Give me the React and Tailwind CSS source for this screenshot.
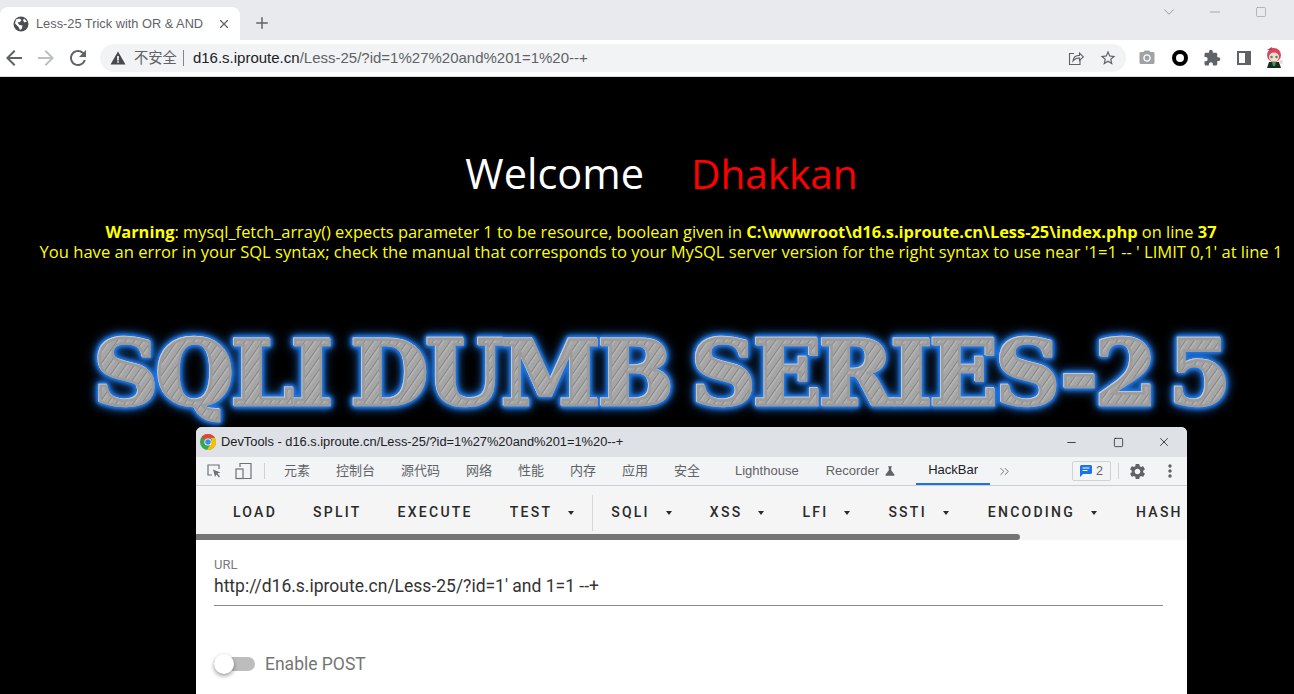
import { X, Plus, ChevronDown, Minus, Square, ChevronsRight } from 'lucide-react'
import { MdArrowBack, MdArrowForward, MdRefresh, MdStarBorder, MdCameraAlt, MdExtension, MdSettings, MdMoreVert, MdScience } from 'react-icons/md'

const sans = "font-['Open_Sans','Noto_Sans_CJK_SC',sans-serif]"

function GlobeIcon() {
  return (
    <svg width="16" height="16" viewBox="0 0 16 16">
      <circle cx="8" cy="8" r="7.500" fill="#4a4d51" />
      <path d="M3 3.500 6.500 2.500 8.500 4 7 6 4.500 6.500 6.500 9 9.500 9.500 9 12.500 7 14 5.500 11 2 7.500ZM11 2.500 14 5.500 11.500 6.500 10 4.500Z" fill="#fff" />
    </svg>
  )
}

function WarnIcon() {
  return (
    <svg width="16" height="14" viewBox="0 0 16 14">
      <path d="M8 0.500 15.500 13.500H0.500Z" fill="#45484c" />
      <path d="M7.200 5h1.600v4.400H7.200ZM7.200 10.200h1.600v1.600H7.200Z" fill="#fff" />
    </svg>
  )
}

function ShareIcon() {
  return (
    <svg width="16" height="16" viewBox="0 0 16 16" fill="none" stroke="#5f6368" strokeWidth="1.100">
      <path d="M6 3.500H1.500v11H12V10" />
      <path d="M5 11c.4-3.800 3-5.600 6.500-5.600V3l3.800 3.800-3.800 3.600V8C8.700 8 6.500 9 5 11Z" />
    </svg>
  )
}

function Avatar() {
  return (
    <svg width="20" height="22" viewBox="0 0 20 22">
      <circle cx="10" cy="8" r="7" fill="#d9475f" />
      <path d="M3 3 8 0l1 3Z" fill="#c93a55" />
      <ellipse cx="10" cy="10" rx="5" ry="4.500" fill="#f7dcd0" />
      <circle cx="7.500" cy="10" r="1.300" fill="#2d9b62" />
      <circle cx="12.500" cy="10" r="1.300" fill="#2d9b62" />
      <path d="M5 15h10l2 6H3Z" fill="#1d2b23" />
      <path d="M8 15h4l-1 4H9Z" fill="#2f9e58" />
      <circle cx="17" cy="15" r="2" fill="#e3dcdc" />
    </svg>
  )
}

function ChromeLogo() {
  return (
    <svg width="16" height="16" viewBox="0 0 16 16">
      <circle cx="8" cy="8" r="8" fill="#34a853" />
      <path d="M8 0a8 8 0 0 1 6.930 4H8a4 4 0 0 0-3.460 2L1.600 3.200A8 8 0 0 1 8 0Z" fill="#ea4335" />
      <path d="M14.930 4A8 8 0 0 1 7 15.940L10.500 10a4 4 0 0 0 .2-6Z" fill="#fbbc04" />
      <circle cx="8" cy="8" r="3.600" fill="#fff" />
      <circle cx="8" cy="8" r="2.800" fill="#4285f4" />
    </svg>
  )
}

function BrowserChrome() {
  return (
    <div className={`shrink-0 ${sans}`}>
      <div className="flex h-10 items-end bg-[#e8eaed]">
        <div className="flex h-[33px] w-[240px] items-center rounded-t-lg bg-white pl-[13px] pr-[9px]">
          <GlobeIcon />
          <span className="ml-[7px] flex-1 whitespace-nowrap font-['Liberation_Sans',sans-serif] text-[12.800px] text-[#5f6368]">Less-25 Trick with OR &amp; AND</span>
          <X size={14} strokeWidth={2} className="text-[#5f6368]" />
        </div>
        <Plus size={18} strokeWidth={2} className="mb-[8px] ml-[13px] text-[#5f6368]" />
        <div className="flex-1" />
        <div className="mb-[19px] flex items-center pr-[27px] text-[#80868b]">
          <ChevronDown size={18} strokeWidth={1} />
          <Minus size={16} strokeWidth={1} className="ml-[29px]" />
          <Square size={12} strokeWidth={1} className="ml-[32px]" />
        </div>
      </div>
      <div className="flex h-[37px] items-center border-b border-[#dadce0] bg-white pl-[2px]">
        <MdArrowBack size={24} className="text-[#5f6368]" />
        <MdArrowForward size={24} className="ml-[8px] text-[#bcc0c4]" />
        <MdRefresh size={24} className="ml-[8px] text-[#5f6368]" />
        <div className="ml-[10px] flex h-[28px] w-[1026px] items-center rounded-full bg-[#f1f3f4] pl-[10px] pr-[9px]">
          <WarnIcon />
          <span className="ml-[8px] text-[14.300px] text-[#5f6368]">不安全</span>
          <span className="ml-[6px] h-[16px] w-px bg-[#80868b]" />
          <span className="ml-[9px] font-['Liberation_Sans',sans-serif] text-[15px] text-[#5f6368]">
            <span className="text-[#202124]">d16.s.iproute.cn</span>/Less-25/?id=1%27%20and%201=1%20--+
          </span>
          <div className="flex-1" />
          <ShareIcon />
          <MdStarBorder size={18} className="ml-[15px] text-[#5f6368]" />
        </div>
        <MdCameraAlt size={18} className="ml-[12px] text-[#a0a3a6]" />
        <span className="ml-[16px] h-[16px] w-[16px] rounded-full border-[4px] border-black bg-white" />
        <MdExtension size={18} className="ml-[15px] text-[#5f6368]" />
        <span className="ml-[16px] flex h-[14px] w-[14px] justify-end border-[2px] border-[#5f6368] bg-white"><span className="h-full w-[4px] bg-[#5f6368]" /></span>
        <span className="ml-[13px]"><Avatar /></span>
      </div>
    </div>
  )
}

function Tab({ children, className = '' }) {
  return <span className={`text-[13px] ${className}`}>{children}</span>
}

function HackBtn({ label, arrow, className = '' }) {
  return (
    <span className={`flex shrink-0 items-center whitespace-nowrap font-['Roboto',sans-serif] text-[14px] font-medium tracking-[2.250px] text-[#2a2a2a] ${className}`}>
      {label}
      {arrow && <span className="ml-[16px] h-0 w-0 border-x-[3.500px] border-t-[4px] border-x-transparent border-t-[#2a2a2a]" />}
    </span>
  )
}

function DevTools() {
  return (
    <div className="absolute left-[196px] top-[350px] w-[991px] overflow-hidden rounded-t-[6px] bg-white text-left">
      <div className="flex h-[30px] items-center bg-[#dee1e6] pl-[4px]">
        <ChromeLogo />
        <span className="ml-[5px] font-['Liberation_Sans',sans-serif] text-[12.850px] text-[#202124]">DevTools - d16.s.iproute.cn/Less-25/?id=1%27%20and%201=1%20--+</span>
        <div className="flex-1" />
        <Minus size={13} strokeWidth={1.300} className="text-black" />
        <Square size={11} strokeWidth={1.400} className="ml-[35px] text-black" />
        <X size={14} strokeWidth={1.200} className="ml-[33px] mr-[16px] text-black" />
      </div>
      <div className={`flex h-[29px] items-center border-b border-[#cbcdd1] bg-[#f3f4f6] text-[#5f6368] ${sans}`}>
        <svg width="16" height="16" viewBox="0 0 16 16" fill="none" stroke="#6e7276" strokeWidth="1.200" className="ml-[10px]">
          <path d="M6 12H2V2h11v4" />
          <path d="M7 6.500 14.500 9.500 11.500 10.500 14 13.500 13 14.500 10.500 11.500 9 14Z" fill="#6e7276" stroke="none" />
        </svg>
        <svg width="17" height="18" viewBox="0 0 17 18" fill="none" stroke="#6e7276" strokeWidth="1.200" className="ml-[13px]">
          <path d="M5 5V1.500h11v15H8" />
          <rect x="1" y="7" width="7" height="9.500" />
        </svg>
        <span className="ml-[12px] h-[16px] w-px bg-[#d0d2d6]" />
        <div className="ml-[19px] flex w-[421px] gap-[26px]">
          <Tab>元素</Tab><Tab>控制台</Tab><Tab>源代码</Tab><Tab>网络</Tab><Tab>性能</Tab><Tab>内存</Tab><Tab>应用</Tab><Tab>安全</Tab>
        </div>
        <Tab className="ml-[30px] font-['Liberation_Sans',sans-serif]">Lighthouse</Tab>
        <Tab className="ml-[27px] font-['Liberation_Sans',sans-serif]">Recorder</Tab>
        <MdScience size={14} className="ml-[4px]" />
        <span className="ml-[19px] flex h-full w-[74px] items-center justify-center border-b-2 border-[#1a73e8] font-['Liberation_Sans',sans-serif] text-[13px] text-[#202124]">HackBar</span>
        <ChevronsRight size={15} strokeWidth={1.400} className="ml-[7px]" />
        <div className="flex-1" />
        <span className="flex h-[20px] w-[39px] items-center justify-center gap-[4px] rounded-[2px] border border-[#d0d2d6] font-['Liberation_Sans',sans-serif] text-[12.500px]">
          <svg width="12" height="12" viewBox="0 0 12 12">
            <path d="M0 1.500A1.500 1.500 0 0 1 1.500 0h9A1.500 1.500 0 0 1 12 1.500v6A1.500 1.500 0 0 1 10.500 9H3l-3 3Z" fill="#1a73e8" />
            <path d="M2.500 3h7M2.500 5.500h5" stroke="#fff" />
          </svg>
          2
        </span>
        <span className="ml-[7px] h-[16px] w-px bg-[#d0d2d6]" />
        <MdSettings size={19} className="ml-[9px]" />
        <MdMoreVert size={20} className="ml-[13px] mr-[7px]" />
      </div>
      <div className="relative h-[54px] overflow-hidden bg-[#f5f5f5]">
        <div className="flex h-[53px] items-center pl-[37px]">
          <HackBtn label="LOAD" />
          <HackBtn label="SPLIT" className="ml-[36px]" />
          <HackBtn label="EXECUTE" className="ml-[36px]" />
          <HackBtn label="TEST" arrow className="ml-[37px]" />
          <span className="ml-[18px] h-[36px] w-px shrink-0 bg-[#d8d8d8]" />
          <HackBtn label="SQLI" arrow className="ml-[18px]" />
          <HackBtn label="XSS" arrow className="ml-[38px]" />
          <HackBtn label="LFI" arrow className="ml-[38px]" />
          <HackBtn label="SSTI" arrow className="ml-[38px]" />
          <HackBtn label="ENCODING" arrow className="ml-[39px]" />
          <HackBtn label="HASH" className="ml-[39px]" />
        </div>
        <div className="absolute bottom-0 left-0 h-[6px] w-[824px] rounded-r-full bg-[#757575]" />
      </div>
      <div className="h-[155px] bg-white pl-[18px] pr-[24px] pt-[18px] font-['Roboto',sans-serif]">
        <div className="text-[13px] leading-[14px] text-[#7a7a7a]">URL</div>
        <div className="mt-[1px] h-[33px] border-b border-[#8a8a8a] text-[17.500px] leading-[26px] text-[#333]">http://d16.s.iproute.cn/Less-25/?id=1' and 1=1 --+</div>
        <div className="mt-[45px] flex items-center">
          <span className="relative h-[14px] w-[41px] rounded-full bg-[#bdbdbd]">
            <span className="absolute left-0 top-[-3px] h-[20px] w-[20px] rounded-full bg-white shadow-[0_2px_4px_rgba(0,0,0,0.4)]" />
          </span>
          <span className="ml-[10px] text-[17.500px] text-[#757575]">Enable POST</span>
        </div>
      </div>
    </div>
  )
}

export default function App() {
  return (
    <div className="flex h-screen flex-col overflow-hidden bg-black">
      <BrowserChrome />
      <main className={`relative flex-1 text-center ${sans}`}>
        <h1 className="ml-[29px] mt-[68px] text-[41.500px] leading-[56px] text-white">
          Welcome<span className="ml-[47px] text-[40.500px] text-[#ff0000]">Dhakkan</span>
        </h1>
        <div className="mt-[20px] whitespace-nowrap leading-[20px] text-[#ffff00]">
          <div className="ml-[28px] text-[16.420px]"><b>Warning</b>: mysql_fetch_array() expects parameter 1 to be resource, boolean given in <b>C:\wwwroot\d16.s.iproute.cn\Less-25\index.php</b> on line <b>37</b></div>
          <div className="ml-[28px] text-[16.570px]">You have an error in your SQL syntax; check the manual that corresponds to your MySQL server version for the right syntax to use near '1=1 -- ' LIMIT 0,1' at line 1</div>
        </div>
        <div className="mt-[67px] whitespace-nowrap pl-[28px] [filter:drop-shadow(-0.5px_-0.5px_0_#c8c8c8)_drop-shadow(0_0_1.500px_#1f78e8)_drop-shadow(0_0_1.500px_#1f78e8)_drop-shadow(0_0_2px_#1f78e8)_drop-shadow(0_0_5px_#1a5fb4)]">
          <span className="bg-[repeating-linear-gradient(125deg,#a6a6a6_0px,#a6a6a6_2px,#848484_3px,#b6b6b6_4px,#a0a0a0_7px)] bg-clip-text font-['DejaVu_Serif',serif] text-[90px] font-bold leading-[88px] tracking-[-3px] text-transparent [-webkit-text-stroke:2.500px_#9c9c9c] [word-spacing:-8px]">SQLI DUMB SERIES-2<span className="ml-[14px]">5</span></span>
        </div>
        <DevTools />
      </main>
    </div>
  )
}
